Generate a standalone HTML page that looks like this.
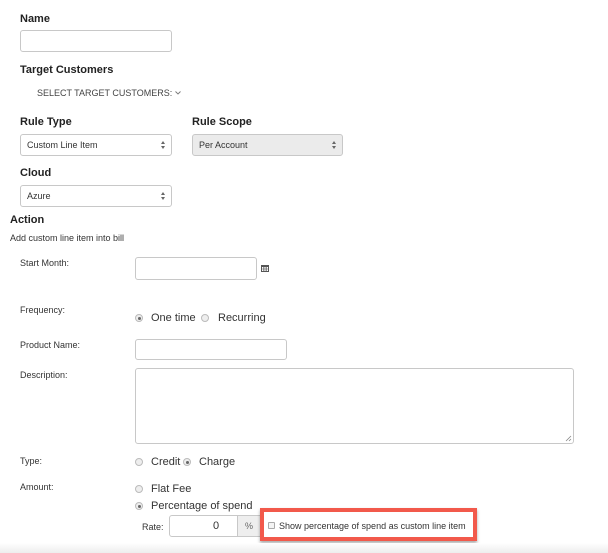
<!DOCTYPE html>
<html><head><style>
*{box-sizing:border-box;margin:0;padding:0}
body{width:608px;height:553px;background:#fff;font-family:"Liberation Sans",sans-serif;color:#333;position:relative;overflow:hidden}
.a{position:absolute;white-space:nowrap}
.b{font-weight:bold;font-size:11px;color:#222}
.s{font-size:9px;color:#333}
.m{font-size:11px;color:#333}
.in{position:absolute;border:1px solid #c8c8c8;border-radius:3px;background:#fff}
.sel{position:absolute;border:1px solid #c8c8c8;border-radius:3px;background:#fff;font-size:9px;padding:5px 6px;color:#333}
.sel:after{content:"";position:absolute;right:6px;top:6px;width:0;height:0;border-left:2.5px solid transparent;border-right:2.5px solid transparent;border-bottom:3px solid #666}
.sel:before{content:"";position:absolute;right:6px;top:11px;width:0;height:0;border-left:2.5px solid transparent;border-right:2.5px solid transparent;border-top:3px solid #666}
.r{position:absolute;width:8px;height:8px;border-radius:50%;border:1px solid #bbb;background:#eee}
.r.on:after{content:"";position:absolute;left:1.5px;top:1.5px;width:3px;height:3px;border-radius:50%;background:#666}
</style></head><body>
<div class="a b" style="left:20px;top:13px">Name</div>
<div class="in" style="left:20px;top:30px;width:152px;height:22px"></div>
<div class="a b" style="left:20px;top:64px">Target Customers</div>
<div class="a s" style="left:37px;top:88px;color:#444">SELECT TARGET CUSTOMERS:</div>
<svg class="a" style="left:175px;top:91px" width="6" height="4"><path d="M0.5 0.5L3 3L5.5 0.5" stroke="#777" fill="none" stroke-width=".9"/></svg>
<div class="a b" style="left:20px;top:116px">Rule Type</div>
<div class="a b" style="left:192px;top:116px">Rule Scope</div>
<div class="sel" style="left:20px;top:134px;width:152px;height:22px">Custom Line Item</div>
<div class="sel" style="left:192px;top:134px;width:151px;height:22px;background:#ebebeb">Per Account</div>
<div class="a b" style="left:20px;top:167px">Cloud</div>
<div class="sel" style="left:20px;top:185px;width:152px;height:22px">Azure</div>
<div class="a b" style="left:10px;top:214px">Action</div>
<div class="a s" style="left:10px;top:233px">Add custom line item into bill</div>
<div class="a s" style="left:20px;top:258px">Start Month:</div>
<div class="in" style="left:135px;top:257px;width:122px;height:23px"></div>
<svg class="a" style="left:261px;top:264px" width="8" height="8" viewBox="0 0 8 8"><rect x="0.5" y="1.5" width="7" height="6" fill="#fff" stroke="#555"/><rect x="0" y="1" width="8" height="2" fill="#555"/><path d="M2.5 3v4M4 3v4M5.5 3v4M1 5h6" stroke="#555" stroke-width=".6"/></svg>
<div class="a s" style="left:20px;top:305px">Frequency:</div>
<div class="r on" style="left:135px;top:314px"></div>
<div class="a m" style="left:151px;top:312px">One time</div>
<div class="r" style="left:201px;top:314px"></div>
<div class="a m" style="left:218px;top:312px">Recurring</div>
<div class="a s" style="left:20px;top:340px">Product Name:</div>
<div class="in" style="left:135px;top:339px;width:152px;height:21px"></div>
<div class="a s" style="left:20px;top:370px">Description:</div>
<div class="in" style="left:135px;top:368px;width:439px;height:76px"></div>
<svg class="a" style="left:565px;top:435px" width="7" height="7"><path d="M1 6L6 1M4 6L6 4" stroke="#888" stroke-width=".8"/></svg>
<div class="a s" style="left:20px;top:456px">Type:</div>
<div class="r" style="left:135px;top:458px"></div>
<div class="a m" style="left:151px;top:456px">Credit</div>
<div class="r on" style="left:183px;top:458px"></div>
<div class="a m" style="left:199px;top:456px">Charge</div>
<div class="a s" style="left:20px;top:482px">Amount:</div>
<div class="r" style="left:135px;top:485px"></div>
<div class="a m" style="left:151px;top:483px">Flat Fee</div>
<div class="r on" style="left:135px;top:502px"></div>
<div class="a m" style="left:151px;top:500px">Percentage of spend</div>
<div class="a s" style="left:142px;top:522px">Rate:</div>
<div class="in" style="left:169px;top:515px;width:70px;height:22px;border-radius:3px 0 0 3px"></div>
<div class="a m" style="left:213px;top:520px">0</div>
<div class="in" style="left:237px;top:515px;width:26px;height:22px;border-radius:0 3px 3px 0;background:#eee"></div>
<div class="a s" style="left:245px;top:521px;color:#666">%</div>
<div class="a" style="left:260px;top:508px;width:217px;height:33px;border:4px solid #f2594b;box-shadow:0 2px 3px rgba(0,0,0,.35)"></div>
<div class="a" style="left:268px;top:522px;width:7px;height:7px;border:1px solid #aaa;border-radius:1px;background:#f4f4f4"></div>
<div class="a s" style="left:279px;top:521px">Show percentage of spend as custom line item</div>
<div class="a" style="left:0;top:543px;width:608px;height:10px;background:linear-gradient(#fff,#ededed)"></div>
</body></html>
